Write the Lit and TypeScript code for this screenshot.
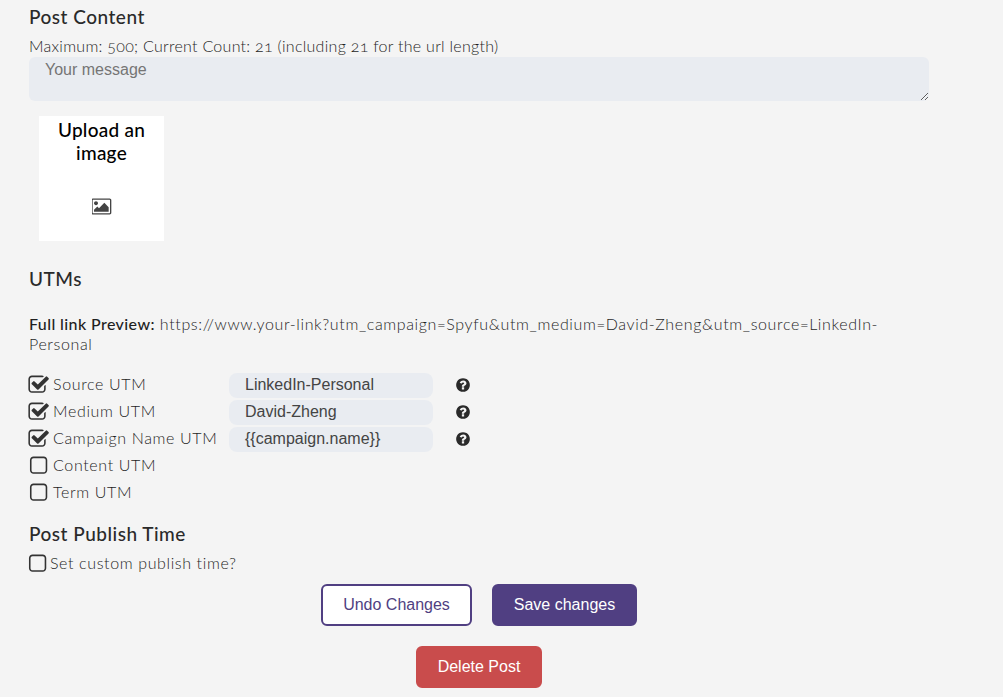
import { LitElement, html, css, svg } from "lit";
import { customElement } from "lit/decorators.js";

const CHECK = svg`<path d="M1472 930v318q0 119-84.5 203.5t-203.5 84.5h-832q-119 0-203.5-84.5t-84.5-203.5v-832q0-119 84.5-203.5t203.5-84.5h832q63 0 117 25 15 7 18 23 3 17-9 29l-49 49q-10 10-23 10-3 0-9-2-23-6-45-6h-832q-66 0-113 47t-47 113v832q0 66 47 113t113 47h832q66 0 113-47t47-113v-254q0-13 9-22l64-64q10-10 23-10 6 0 12 3 20 8 20 29zm231-489l-814 814q-24 24-57 24t-57-24l-430-430q-24-24-24-57t24-57l110-110q24-24 57-24t57 24l263 263 647-647q24-24 57-24t57 24l110 110q24 24 24 57t-24 57z"/>`;
const SQUARE = svg`<path d="M1312 256h-832q-66 0-113 47t-47 113v832q0 66 47 113t113 47h832q66 0 113-47t47-113v-832q0-66-47-113t-113-47zm288 160v832q0 119-84.5 203.5t-203.5 84.5h-832q-119 0-203.5-84.5t-84.5-203.5v-832q0-119 84.5-203.5t203.5-84.5h832q119 0 203.5 84.5t84.5 203.5z"/>`;
const HELP = svg`<path d="M1024 1376v-192q0-14-9-23t-23-9h-192q-14 0-23 9t-9 23v192q0 14 9 23t23 9h192q14 0 23-9t9-23zm256-672q0-88-55.5-163t-138.5-116-170-41q-243 0-371 213-15 24 8 42l132 100q7 6 19 6 16 0 25-12 53-68 86-92 34-24 86-24 48 0 85.5 26t37.5 59q0 38-20 61t-68 45q-63 28-115.5 86.5t-52.5 125.5v36q0 14 9 23t23 9h192q14 0 23-9t9-23q0-19 21.5-49.5t54.5-49.5q32-18 49-28.5t46-35 44.5-48 28-60.5 12.5-81zm384 192q0 209-103 385.5t-279.5 279.5-385.5 103-385.5-103-279.5-279.5-103-385.5 103-385.5 279.5-279.5 385.5-103 385.5 103 279.5 279.5 103 385.5z"/>`;
const PICTURE = svg`<path d="M576 576q0 80-56 136t-136 56-136-56-56-136 56-136 136-56 136 56 56 136zm1024 384v448h-1408v-192l320-320 160 160 512-512zm96-704h-1600q-13 0-22.5 9.5t-9.5 22.5v1216q0 13 9.5 22.5t22.5 9.5h1600q13 0 22.5-9.5t9.5-22.5v-1216q0-13-9.5-22.5t-22.5-9.5zm160 32v1216q0 66-47 113t-113 47h-1600q-66 0-113-47t-47-113v-1216q0-66 47-113t113-47h1600q66 0 113 47t47 113z"/>`;

const utms = [
  { label: "Source UTM", value: "LinkedIn-Personal", on: true },
  { label: "Medium UTM", value: "David-Zheng", on: true },
  { label: "Campaign Name UTM", value: "{{campaign.name}}", on: true },
  { label: "Content UTM", value: "", on: false },
  { label: "Term UTM", value: "", on: false },
];

@customElement("app-root")
export class AppRoot extends LitElement {
  static styles = css`
    :host {
      display: block;
      height: 697px;
      overflow: hidden;
      box-sizing: border-box;
      background: #f4f4f4;
      color: #1f1f1f;
      font-family: "Lato", "Open Sans", sans-serif;
      font-size: 16px;
      font-weight: 300;
      font-variant-numeric: oldstyle-nums;
    }
    .page { width: 900px; margin-left: 29px; display: flex; flex-direction: column; }
    h2 { margin: 0; font-size: 19px; font-weight: 500; line-height: 24px; color: #2a2a2a; letter-spacing: 0.5px; }
    .h-content { margin-top: 5px; }
    .count { margin-top: 7px; line-height: 20px; height: 21px; letter-spacing: 0.28px; }
    .message {
      display: block; box-sizing: border-box; width: 900px; height: 44px; margin: 0;
      background: #e9ecf1; border: none; border-radius: 6px; padding: 3px 16px;
      font: 16px/20px "Liberation Sans", sans-serif; color: #444; outline: none; resize: vertical;
    }
    .message::placeholder { color: #757575; opacity: 1; }
    .upload {
      width: 125px; height: 125px; margin: 15px 0 0 10px; background: #fff;
      display: flex; flex-direction: column; align-items: center;
      text-align: center; color: #000; font-size: 19px; font-weight: 500; line-height: 23px; padding-top: 3px; box-sizing: border-box;
      letter-spacing: 0.25px;
    }
    .upload span { margin-top: -1px; }
    .upload svg { width: 20px; height: 19px; margin-top: 33px; fill: #444; }
    .h-utm { margin-top: 26px; }
    .preview { margin: 23px 0 0; line-height: 20px; letter-spacing: 0.63px; }
    .preview b { font-weight: 500; letter-spacing: 0.4px; }
    .rows { margin-top: 19px; display: flex; flex-direction: column; gap: 2px; }
    .row { display: flex; align-items: center; height: 25px; }
    .label { width: 200px; display: flex; align-items: center; flex: none; letter-spacing: 0.65px; }
    .label span { padding-bottom: 4px; }
    .box { width: 22px; height: 22px; flex: none; fill: #333; margin: -2px 3px 0 -1px; }
    .input {
      box-sizing: border-box; width: 204px; height: 25px; background: #e9ecf1; border-radius: 8px;
      padding-left: 16px; font: 16px/24px "Liberation Sans", sans-serif; font-variant-numeric: normal; color: #444;
    }
    .help { width: 16px; height: 16px; margin: -2px 0 0 22px; fill: #2a2a2a; flex: none; }
    .h-time { margin-top: 16px; }
    .custom { display: flex; align-items: center; margin-top: 4px; height: 24px; letter-spacing: 0.62px; }
    .custom .box { margin: 4px 1px 0 -2px; }
    .actions { display: flex; justify-content: center; gap: 20px; margin-top: 10px; }
    .btn {
      box-sizing: border-box; height: 42px; border-radius: 6px; border: 2px solid #503f82;
      font: 16px "Liberation Sans", sans-serif; padding: 0; margin: 0;
    }
    .undo { width: 151px; background: #fff; color: #503f82; }
    .save { width: 145px; background: #503f82; color: #fff; }
    .delete { width: 126px; background: #c94c4c; border-color: #c94c4c; color: #fff; align-self: center; margin-top: 20px; }
  `;

  render() {
    return html`<div class="page">
      <h2 class="h-content">Post Content</h2>
      <div class="count">Maximum: 500; Current Count: 21 (including 21 for the url length)</div>
      <textarea class="message" placeholder="Your message"></textarea>
      <div class="upload">
        <span>Upload an image</span>
        <svg viewBox="0 0 1920 1792">${PICTURE}</svg>
      </div>
      <h2 class="h-utm">UTMs</h2>
      <p class="preview"><b>Full link Preview:</b> https://www.your-link?utm_campaign=Spyfu&utm_medium=David-Zheng&utm_source=LinkedIn-Personal</p>
      <div class="rows">
        ${utms.map(
          (u) => html`<div class="row">
            <span class="label">
              <svg class="box" viewBox="64 0 1728 1792">${u.on ? CHECK : SQUARE}</svg>
              <span>${u.label}</span>
            </span>
            ${u.value
              ? html`<span class="input">${u.value}</span>
                  <svg class="help" viewBox="0 0 1792 1792">${HELP}</svg>`
              : null}
          </div>`
        )}
      </div>
      <h2 class="h-time">Post Publish Time</h2>
      <div class="custom">
        <svg class="box" viewBox="64 0 1728 1792">${SQUARE}</svg>
        Set custom publish time?
      </div>
      <div class="actions">
        <button class="btn undo">Undo Changes</button>
        <button class="btn save">Save changes</button>
      </div>
      <button class="btn delete">Delete Post</button>
    </div>`;
  }
}
